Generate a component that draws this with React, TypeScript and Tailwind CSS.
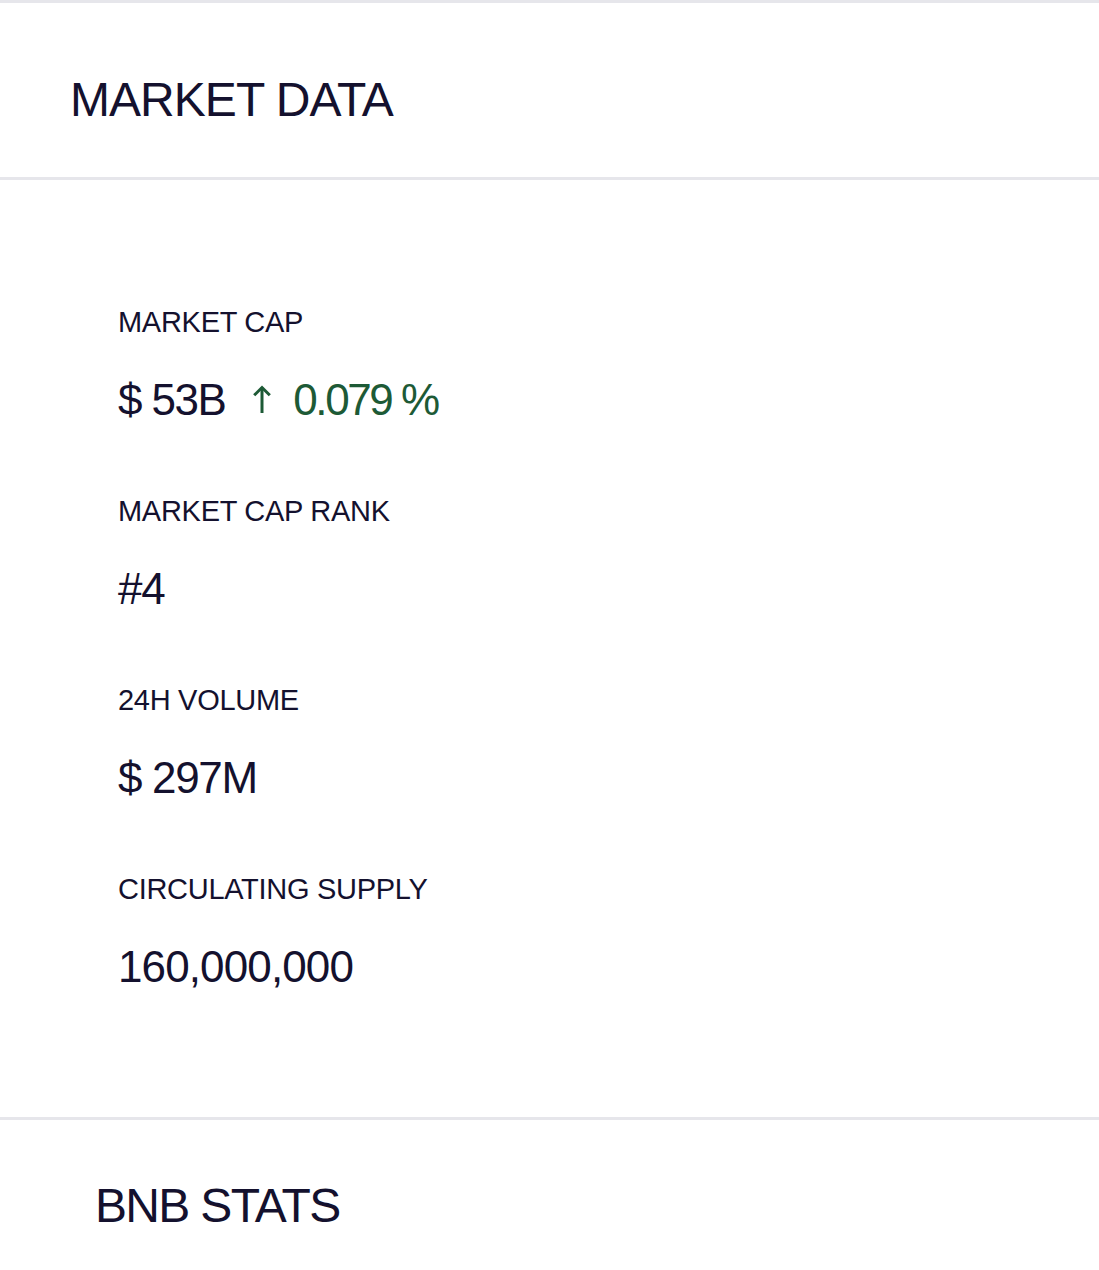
export default function App() {
  const font = { fontFamily: '"Liberation Sans", Arial, sans-serif' };
  const Label = ({ children }: { children: React.ReactNode }) => (
    <div className="text-[29px] leading-none tracking-[-0.01em] text-[#14112e]">{children}</div>
  );
  const Value = ({ children }: { children: React.ReactNode }) => (
    <div className="text-[44px] leading-none tracking-[-0.03em] text-[#14112e]">{children}</div>
  );
  return (
    <div className="w-[1099px] h-[1270px] bg-white overflow-hidden" style={font}>
      <div className="border-t-[3px] border-b-[3px] border-[#e6e6eb] h-[180px] pt-[73px] pl-[70px]">
        <h2 className="text-[48px] leading-none tracking-[-0.02em] text-[#14112e]">MARKET DATA</h2>
      </div>
      <div className="border-b-[3px] border-[#e6e6eb] pt-[128px] pb-[128px] pl-[118px] flex flex-col gap-[75px]">
        <div className="flex flex-col gap-[41px]">
          <Label>MARKET CAP</Label>
          <div className="flex items-start">
            <div className="text-[44px] leading-none tracking-[-0.035em] text-[#14112e]">$ 53B</div>
            <svg className="ml-[28px] mt-[7px]" width="18" height="28" viewBox="0 0 18 28" fill="none" stroke="#1d5a36" strokeWidth="3" strokeLinecap="butt" strokeLinejoin="miter">
              <path d="M9 28V2.5" />
              <path d="M1.2 10.3L9 2.5l7.8 7.8" />
            </svg>
            <div className="ml-[22px] text-[44px] leading-none tracking-[-0.055em] text-[#1d5a36]">0.079 %</div>
          </div>
        </div>
        <div className="flex flex-col gap-[41px]">
          <Label>MARKET CAP RANK</Label>
          <Value>#4</Value>
        </div>
        <div className="flex flex-col gap-[41px]">
          <Label>24H VOLUME</Label>
          <Value>$ 297M</Value>
        </div>
        <div className="flex flex-col gap-[41px]">
          <Label>CIRCULATING SUPPLY</Label>
          <div className="text-[44px] leading-none tracking-[-0.02em] text-[#14112e]">160,000,000</div>
        </div>
      </div>
      <div className="pt-[62px] pl-[95px]">
        <h2 className="text-[48px] leading-none tracking-[-0.035em] text-[#14112e]">BNB STATS</h2>
      </div>
    </div>
  );
}
